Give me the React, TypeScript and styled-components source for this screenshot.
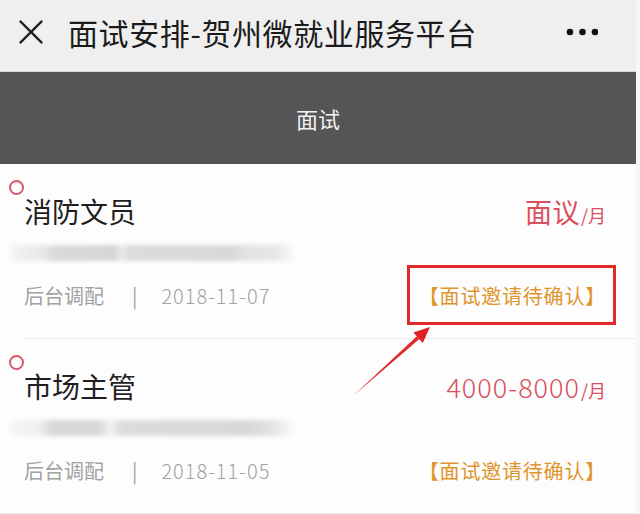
import styled, { createGlobalStyle } from "styled-components";

const GlobalStyle = createGlobalStyle`
  html, body {
    margin: 0;
    padding: 0;
    background: #f6f6f6;
  }
  body {
    font-family: "Noto Sans CJK SC", "Noto Sans", sans-serif;
  }
`;

type Job = {
  title: string;
  salary: string;
  numeric?: boolean;
  date: string;
  blur: string;
  marked?: boolean;
};

const jobs: Job[] = [
  {
    title: "消防文员",
    salary: "面议",
    date: "2018-11-07",
    blur:
      "linear-gradient(90deg, #f4f4f4 0px, #e6e6e6 35px, #d9d9d9 45px, #d6d6d6 105px, #ececec 112px, #dcdcdc 118px, #d8d8d8 220px, #e2e2e2 235px, #e6e6e6 265px, #f6f6f6 282px)",
    marked: true,
  },
  {
    title: "市场主管",
    salary: "4000-8000",
    numeric: true,
    date: "2018-11-05",
    blur:
      "linear-gradient(90deg, #f6f6f6 0px, #eeeeee 30px, #d8d8d8 42px, #d8d8d8 90px, #f2f2f2 100px, #dcdcdc 112px, #d8d8d8 240px, #e4e4e4 262px, #f6f6f6 280px)",
  },
];

export default function App() {
  return (
    <Page>
      <GlobalStyle />
      <TopBar>
        <CloseIcon viewBox="0 0 28 28">
          <path d="M2 2 L26 26 M26 2 L2 26" stroke="#1e1e1e" strokeWidth="2.4" fill="none" />
        </CloseIcon>
        <PageTitle>面试安排-贺州微就业服务平台</PageTitle>
        <MoreIcon viewBox="0 0 32 8">
          <circle cx="4" cy="4" r="3.3" fill="#111" />
          <circle cx="16.5" cy="4" r="3.3" fill="#111" />
          <circle cx="29" cy="4" r="3.3" fill="#111" />
        </MoreIcon>
      </TopBar>
      <TabBar>面试</TabBar>
      <List>
        {jobs.map((job) => (
          <Card key={job.title}>
            <Dot />
            <TitleRow>
              <JobTitle>{job.title}</JobTitle>
              <Salary>
                <Amount $numeric={job.numeric}>{job.salary}</Amount>
                <Unit>/月</Unit>
              </Salary>
            </TitleRow>
            <Blurred style={{ background: job.blur }} />
            <MetaRow>
              <Meta>
                后台调配<Sep>|</Sep>
                <DateText>{job.date}</DateText>
              </Meta>
              <Status $marked={job.marked}>【面试邀请待确认】</Status>
            </MetaRow>
          </Card>
        ))}
        <Arrow viewBox="0 0 100 90">
          <polygon points="10,80 76.4,23.1 73.8,20.3" fill="#e02a2a" />
          <polygon points="87,11 79.8,26.9 70.4,16.5" fill="#e02020" />
        </Arrow>
      </List>
    </Page>
  );
}

const Page = styled.div`
  width: 636px;
  height: 514px;
  background: #fdfdfd;
  overflow: hidden;
`;

const TopBar = styled.div`
  height: 72px;
  background: #efefef;
  display: flex;
  align-items: center;
  padding: 0 38px 8px 18px;
  box-sizing: border-box;
  border-bottom: 1px solid #d8d8d8;
`;

const CloseIcon = styled.svg`
  width: 26px;
  height: 26px;
  flex: none;
`;

const PageTitle = styled.div`
  flex: 1;
  margin-left: 24px;
  font-size: 30px;
  letter-spacing: 0.6px;
  color: #1b1b1b;
  white-space: nowrap;
`;

const MoreIcon = styled.svg`
  width: 32px;
  height: 8px;
  flex: none;
`;

const TabBar = styled.div`
  height: 92px;
  background: #555555;
  color: #f2f2f2;
  font-size: 22px;
  display: flex;
  align-items: center;
  justify-content: center;
`;

const List = styled.div`
  position: relative;
  background: #fdfdfd;
`;

const Card = styled.div`
  position: relative;
  padding: 28px 30px 29px 24px;
  border-bottom: 1px solid #ececec;
  &:first-child {
    margin-left: 24px;
    padding-left: 0;
  }
  &:first-child > span:first-child {
    left: -15px;
  }
`;

const Dot = styled.span`
  position: absolute;
  left: 9px;
  top: 16px;
  width: 11px;
  height: 11px;
  border: 2px solid #d9576a;
  border-radius: 50%;
`;

const TitleRow = styled.div`
  display: flex;
  align-items: center;
  justify-content: space-between;
  height: 38px;
`;

const JobTitle = styled.div`
  font-size: 28px;
  color: #1f1f1f;
`;

const Salary = styled.div`
  font-size: 27px;
  color: #d8505e;
  display: flex;
  align-items: baseline;
`;

const Amount = styled.span<{ $numeric?: boolean }>`
  font-weight: ${(p) => (p.$numeric ? 300 : 400)};
  letter-spacing: ${(p) => (p.$numeric ? "1px" : "0.5px")};
`;

const Unit = styled.span`
  font-size: 18px;
  margin-left: 1px;
`;

const Blurred = styled.div`
  margin: 15px 0 0 -14px;
  width: 282px;
  height: 16px;
  filter: blur(2px);
`;

const MetaRow = styled.div`
  display: flex;
  align-items: center;
  justify-content: space-between;
  height: 28px;
  margin-top: 20px;
`;

const Meta = styled.div`
  font-size: 20px;
  color: #a2a2a2;
  white-space: nowrap;
`;

const DateText = styled.span`
  font-weight: 300;
  letter-spacing: 1px;
`;

const Sep = styled.span`
  margin: 0 24px 0 28px;
`;

const Status = styled.div<{ $marked?: boolean }>`
  position: relative;
  font-size: 20px;
  letter-spacing: 0.8px;
  color: #e0942c;
  white-space: nowrap;
  &::after {
    content: "";
    display: ${(p) => (p.$marked ? "block" : "none")};
    position: absolute;
    left: -12px;
    right: -10px;
    top: -16px;
    bottom: -15px;
    border: 3px solid #e02a2a;
  }
`;

const Arrow = styled.svg`
  position: absolute;
  left: 343px;
  top: 152px;
  width: 100px;
  height: 90px;
`;
